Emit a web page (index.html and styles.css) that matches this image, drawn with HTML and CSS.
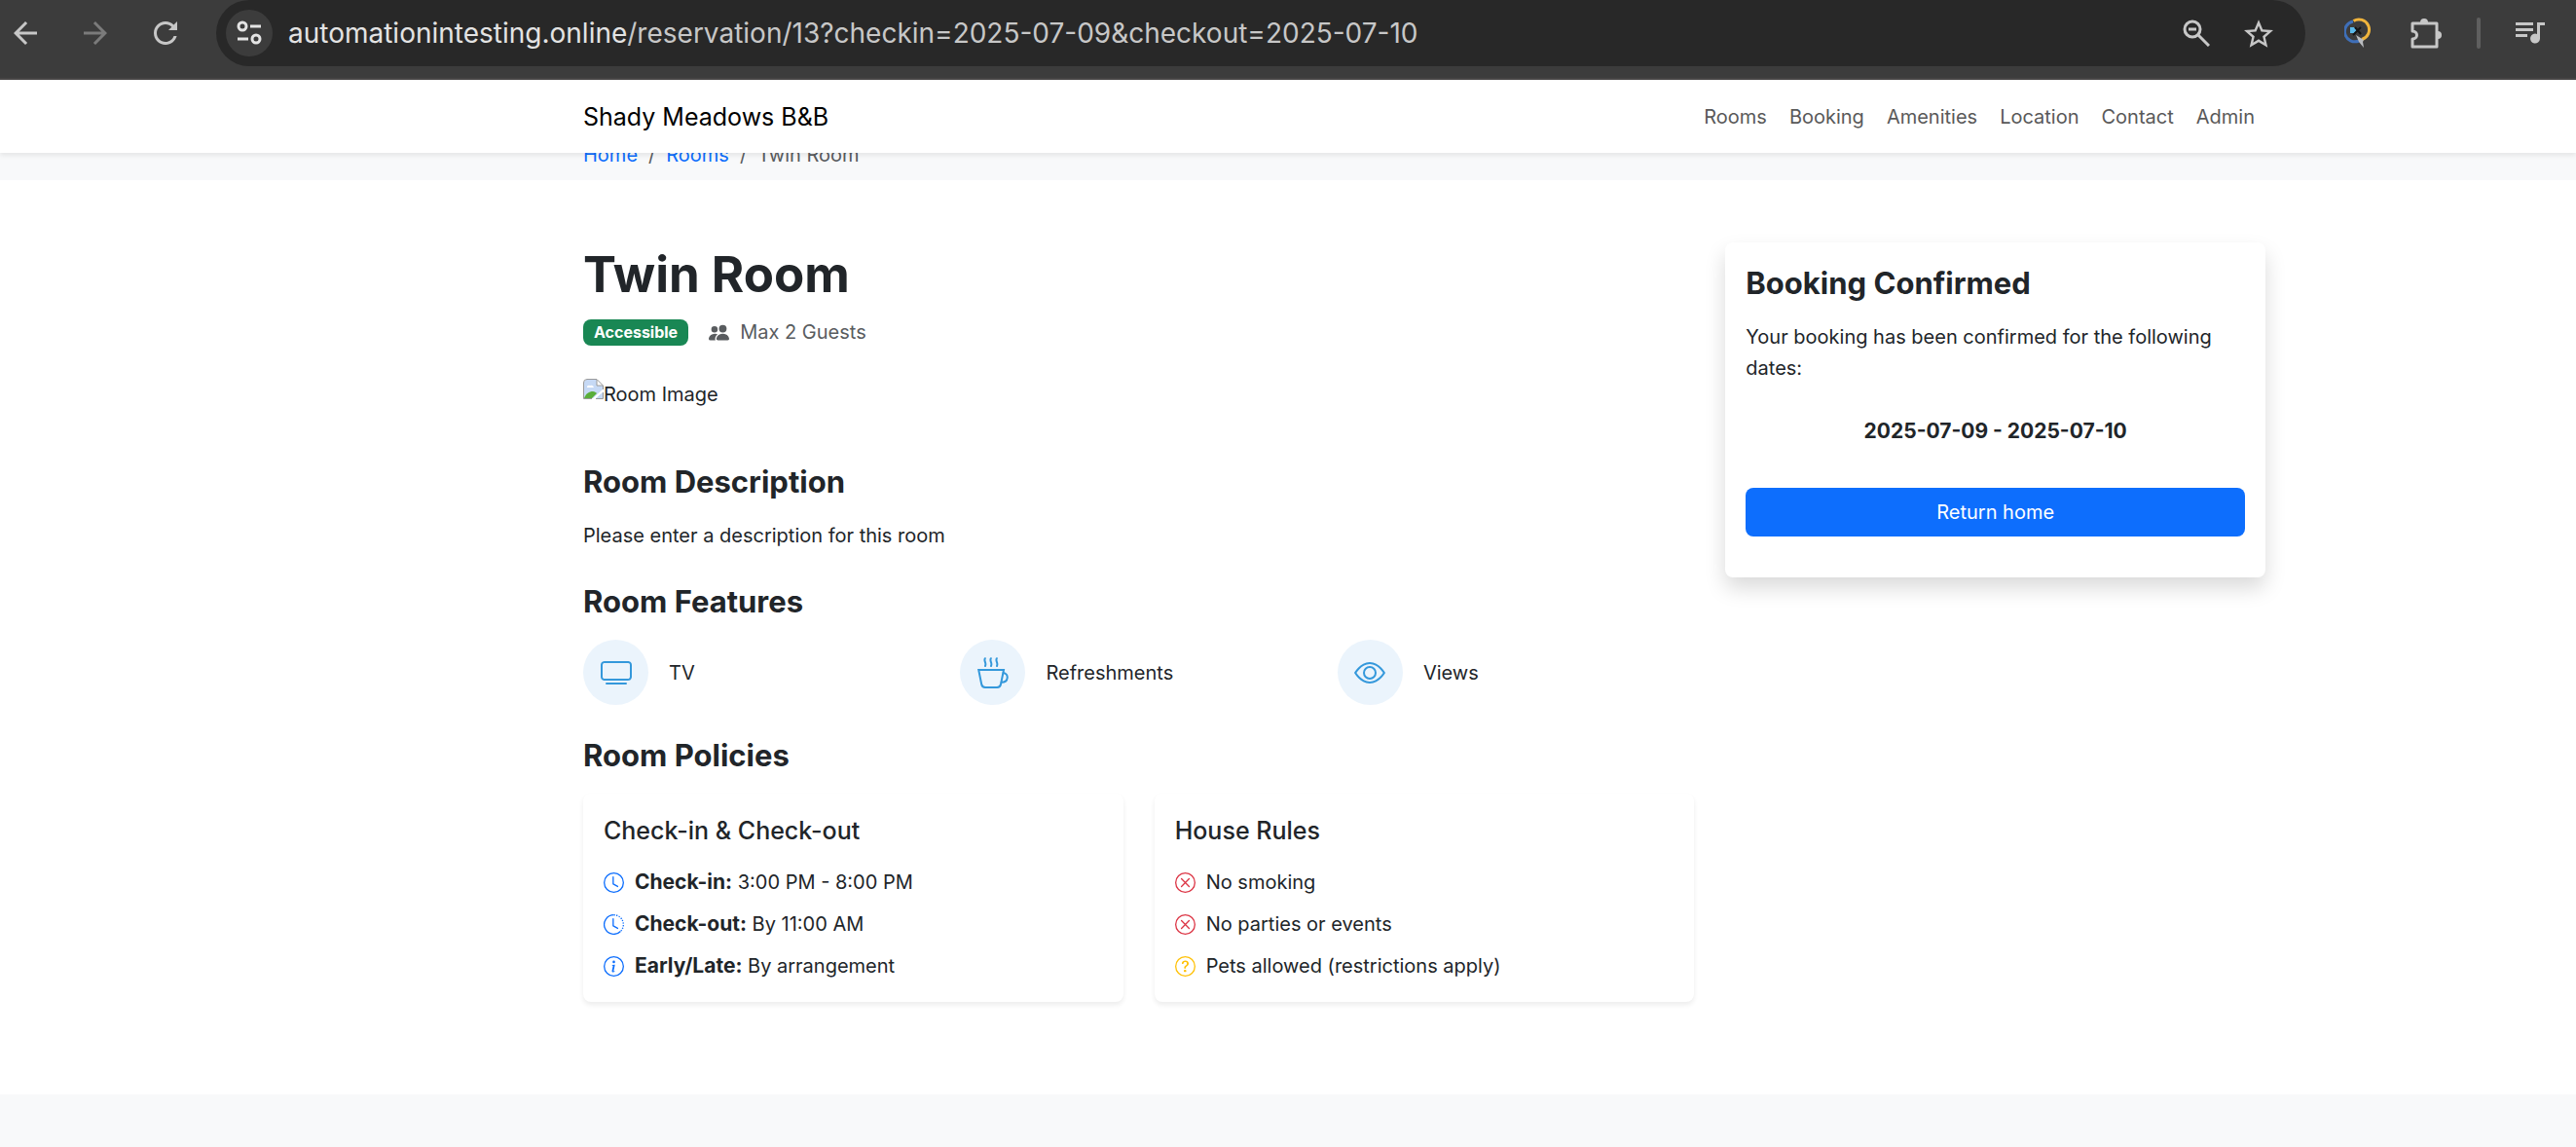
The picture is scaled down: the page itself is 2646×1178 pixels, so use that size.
FILE: index.html
```html
<!DOCTYPE html>
<html lang="en">
<head>
<meta charset="utf-8">
<title>Twin Room - Shady Meadows B&amp;B</title>
<link rel="stylesheet" href="styles.css">
</head>
<body>
<div class="toolbar">
  <div class="toolbar-nav">
    <button class="tool" type="button" aria-label="Back"><svg viewBox="4 4 16 16" width="24" height="24"><path fill="currentColor" d="M20 11H7.83l5.59-5.59L12 4l-8 8 8 8 1.41-1.41L7.83 13H20v-2z"/></svg></button>
    <button class="tool tool-off" type="button" aria-label="Forward"><svg viewBox="4 4 16 16" width="24" height="24"><path fill="currentColor" d="M12 4l-1.41 1.41L16.17 11H4v2h12.17l-5.58 5.59L12 20l8-8z"/></svg></button>
    <button class="tool" type="button" aria-label="Reload"><svg viewBox="4 4 16 16" width="24" height="24"><path fill="currentColor" d="M17.65 6.35C16.2 4.9 14.21 4 12 4c-4.42 0-7.99 3.58-7.99 8s3.57 8 7.99 8c3.73 0 6.84-2.55 7.73-6h-2.08c-.82 2.33-3.04 4-5.65 4-3.31 0-6-2.69-6-6s2.69-6 6-6c1.66 0 3.14.69 4.22 1.78L14 10h6V4z"/></svg></button>
  </div>
  <div class="address">
    <button class="site-info" type="button" aria-label="Site information"><svg viewBox="0 0 26 26" width="26" height="26" fill="none" stroke="currentColor" stroke-width="3"><circle cx="6" cy="6" r="4"/><path d="M14 6h11M1 19h11"/><circle cx="20" cy="19" r="4"/></svg></button>
    <div class="url" role="textbox" aria-label="Address" tabindex="0"><span class="url-host">automationintesting.online</span>/reservation/13?checkin=2025-07-09&amp;checkout=2025-07-10</div>
    <button class="tool" type="button" aria-label="Zoom"><svg viewBox="0 0 28 28" width="28" height="28" fill="none" stroke="currentColor" stroke-width="3"><circle cx="10" cy="10" r="8"/><path d="M16 16l11 11M6 10h8"/></svg></button>
    <button class="tool" type="button" aria-label="Bookmark"><svg viewBox="2 2 20 19" width="30" height="29"><path fill="currentColor" d="M22 9.24l-7.19-.62L12 2 9.19 8.63 2 9.24l5.46 4.73L5.82 21 12 17.27 18.18 21l-1.63-7.03L22 9.24zM12 15.4l-3.76 2.27 1-4.28-3.32-2.88 4.38-.38L12 6.1l1.71 4.04 4.38.38-3.32 2.88 1 4.28L12 15.4z"/></svg></button>
  </div>
  <div class="toolbar-end">
    <button class="tool" type="button" aria-label="Inspector extension"><svg viewBox="0 0 32 32" width="32" height="32" fill="none"><path d="M9 4A10.500 10.500 0 1 0 15 24" stroke="#3f6fb8" stroke-width="3"/><path d="M9.500 3.500A10.500 10.500 0 1 1 18 22.500" stroke="#f0b43c" stroke-width="3"/><path fill="#5bb8e8" d="M6 10h4l3 3-3 3H6z"/><path d="M9 18l8-8M11 10l6 7" stroke="#151515" stroke-width="2"/><path fill="#b9bcc0" d="M12 18l8 5-1 2 1 6-5-6z"/></svg></button>
    <button class="tool" type="button" aria-label="Extensions"><svg viewBox="0 0 32 32" width="32" height="32" fill="none"><path d="M2 6h25v24H2v-8c6 0 6-8 0-8z" stroke="currentColor" stroke-width="3" stroke-linejoin="round"/><path fill="currentColor" d="M10 5a4 4 0 0 1 8 0zM28 14a4 4 0 0 1 0 8z"/></svg></button>
    <span class="divider"></span>
    <button class="tool" type="button" aria-label="Media"><svg viewBox="0 0 30 24" width="30" height="24" fill="currentColor"><path d="M0 1h18v3H0zM0 7h18v3H0zM0 13h12v3H0zM22 1h8v3h-5v14a5 5 0 1 1-3-5z"/></svg></button>
  </div>
</div>

<header class="navbar page-grid">
  <nav class="navbar-inner" aria-label="Main">
    <a class="brand" href="#">Shady Meadows B&amp;B</a>
    <ul class="nav-links">
      <li><a href="#">Rooms</a></li>
      <li><a href="#">Booking</a></li>
      <li><a href="#">Amenities</a></li>
      <li><a href="#">Location</a></li>
      <li><a href="#">Contact</a></li>
      <li><a href="#">Admin</a></li>
    </ul>
  </nav>
</header>

<div class="crumb-band page-grid">
  <ol class="crumbs">
    <li><a href="#">Home</a></li>
    <li><a href="#">Rooms</a></li>
    <li>Twin Room</li>
  </ol>
</div>

<main class="room page-grid">
  <div class="room-columns">
    <article class="details">
      <h1>Twin Room</h1>
      <div class="meta">
        <span class="badge">Accessible</span>
        <span class="guests"><svg viewBox="0 0 16 16" width="21" height="21" fill="currentColor"><path d="M7 14s-1 0-1-1 1-4 5-4 5 3 5 4-1 1-1 1zm4-6a3 3 0 1 0 0-6 3 3 0 0 0 0 6m-5.784 6A2.240 2.240 0 0 1 5 13c0-1.355.68-2.750 1.936-3.720A6.300 6.300 0 0 0 5 9c-4 0-5 3-5 4s1 1 1 1zM4.500 8a2.500 2.500 0 1 0 0-5 2.500 2.500 0 0 0 0 5"/></svg>Max 2 Guests</span>
      </div>
      <div class="room-image" role="img" aria-label="Room Image"><svg viewBox="0 0 21 21" width="21" height="21"><path fill="#c6d9f5" d="M3 1h11l6 6v13H1V3z"/><path fill="#fff" d="M4 9a2 2 0 0 1 3-2 3 3 0 0 1 4 2z"/><path fill="#5aae3a" d="M1 20c2-5 5-7 9-7 2 0 3 1 4 2l-5 5z"/><path fill="#fff" d="M14 1v6h6zM21 10v3L12 21H9z"/><path fill="none" stroke="#9a9a9a" d="M9 20.500H.5V4a3.500 3.500 0 0 1 3.500-3.500h10l6.500 6.500v4M14 1v6h6M20.500 14v6.500H13"/></svg><span>Room Image</span></div>

      <section class="description">
        <h2>Room Description</h2>
        <p>Please enter a description for this room</p>
      </section>

      <section class="block">
        <h2>Room Features</h2>
        <ul class="features">
          <li><span class="feature-icon"><svg viewBox="0 0 16 16" width="32" height="32" fill="currentColor"><path d="M2.500 13.500A.5.5 0 0 1 3 13h10a.5.5 0 0 1 0 1H3a.5.5 0 0 1-.5-.5M13.991 3l.024.001a1.500 1.500 0 0 1 .538.143.760.760 0 0 1 .302.254c.067.1.145.277.145.602v5.991l-.001.024a1.500 1.500 0 0 1-.143.538.760.760 0 0 1-.254.302c-.1.067-.277.145-.602.145H2.009l-.024-.001a1.500 1.500 0 0 1-.538-.143.760.760 0 0 1-.302-.254C1.078 10.502 1 10.325 1 10V4.009l.001-.024a1.500 1.500 0 0 1 .143-.538.760.760 0 0 1 .254-.302C1.498 3.078 1.675 3 2 3zM14 2H2C0 2 0 4 0 4v6c0 2 2 2 2 2h12c2 0 2-2 2-2V4c0-2-2-2-2-2"/></svg></span>TV</li>
          <li><span class="feature-icon"><svg viewBox="0 0 16 16" width="32" height="32" fill="none" stroke="currentColor" stroke-linecap="round"><path d="M.6 6.500h12.900l-1.500 7.400a2 2 0 0 1-2 1.600H4.100a2 2 0 0 1-2-1.600z"/><path d="M13.300 8c2.900.3 2.900 4.800-1 4.900M3.900.6c-.8 1.500.9 2.200.1 3.900M6.900.6c-.8 1.500.9 2.200.1 3.900M9.900.6c-.8 1.500.9 2.200.1 3.900"/></svg></span>Refreshments</li>
          <li><span class="feature-icon"><svg viewBox="0 0 16 16" width="32" height="32" fill="currentColor"><path d="M16 8s-3-5.500-8-5.500S0 8 0 8s3 5.500 8 5.500S16 8 16 8M1.173 8a13 13 0 0 1 1.660-2.043C4.120 4.668 5.880 3.500 8 3.500s3.879 1.168 5.168 2.457A13 13 0 0 1 14.828 8q-.086.130-.195.288c-.335.480-.830 1.120-1.465 1.755C11.879 11.332 10.119 12.500 8 12.500s-3.879-1.168-5.168-2.457A13 13 0 0 1 1.172 8z"/><path d="M8 5.500a2.500 2.500 0 1 0 0 5 2.500 2.500 0 0 0 0-5M4.500 8a3.500 3.500 0 1 1 7 0 3.500 3.500 0 0 1-7 0"/></svg></span>Views</li>
        </ul>
      </section>

      <section class="block">
        <h2>Room Policies</h2>
        <div class="policies">
          <div class="policy">
            <h3>Check-in &amp; Check-out</h3>
            <ul>
              <li><svg class="info" viewBox="0 0 16 16" width="21" height="21" fill="none" stroke="currentColor" stroke-linecap="round"><circle cx="8" cy="8" r="7.500"/><path d="M7.500 3.500V9l3.500 2"/></svg><span><strong>Check-in:</strong> 3:00 PM - 8:00 PM</span></li>
              <li><svg class="info" viewBox="0 0 16 16" width="21" height="21" fill="none" stroke="currentColor"><path d="M8 .5a7.500 7.500 0 1 0 5.300 12.800"/><path stroke-dasharray="1 1" d="M8 .5a7.500 7.500 0 0 1 5.300 12.800"/><path stroke-linecap="round" d="M7.500 3.500V9l3.500 2"/></svg><span><strong>Check-out:</strong> By 11:00 AM</span></li>
              <li><svg class="info" viewBox="0 0 16 16" width="21" height="21" fill="currentColor"><path d="M8 15A7 7 0 1 1 8 1a7 7 0 0 1 0 14m0 1A8 8 0 1 0 8 0a8 8 0 0 0 0 16"/><path d="m8.930 6.588-2.290.287-.082.380.450.083c.294.070.352.176.288.469l-.738 3.468c-.194.897.105 1.319.808 1.319.545 0 1.178-.252 1.465-.598l.088-.416c-.2.176-.492.246-.686.246-.275 0-.375-.193-.304-.533zM9 4.500a1 1 0 1 1-2 0 1 1 0 0 1 2 0"/></svg><span><strong>Early/Late:</strong> By arrangement</span></li>
            </ul>
          </div>
          <div class="policy">
            <h3>House Rules</h3>
            <ul>
              <li><svg class="no" viewBox="0 0 16 16" width="21" height="21" fill="none" stroke="currentColor" stroke-linecap="round"><circle cx="8" cy="8" r="7.500"/><path d="M5 5l6 6M11 5l-6 6"/></svg><span>No smoking</span></li>
              <li><svg class="no" viewBox="0 0 16 16" width="21" height="21" fill="none" stroke="currentColor" stroke-linecap="round"><circle cx="8" cy="8" r="7.500"/><path d="M5 5l6 6M11 5l-6 6"/></svg><span>No parties or events</span></li>
              <li><svg class="maybe" viewBox="0 0 16 16" width="21" height="21" fill="currentColor"><path d="M8 15A7 7 0 1 1 8 1a7 7 0 0 1 0 14m0 1A8 8 0 1 0 8 0a8 8 0 0 0 0 16"/><path d="M5.255 5.786a.237.237 0 0 0 .241.247h.825c.138 0 .248-.113.266-.250.090-.656.540-1.134 1.342-1.134.686 0 1.314.343 1.314 1.168 0 .635-.374.927-.965 1.371-.673.489-1.206 1.060-1.168 1.987l.003.217a.25.25 0 0 0 .25.246h.811a.25.25 0 0 0 .25-.25v-.105c0-.718.273-.927 1.010-1.486.609-.463 1.244-.977 1.244-2.056 0-1.511-1.276-2.241-2.673-2.241-1.267 0-2.655.590-2.750 2.286m1.557 5.763c0 .533.425.927 1.010.927.609 0 1.028-.394 1.028-.927 0-.552-.420-.940-1.029-.940-.584 0-1.009.388-1.009.940"/></svg><span>Pets allowed (restrictions apply)</span></li>
            </ul>
          </div>
        </div>
      </section>
    </article>

    <aside class="booking">
      <h2>Booking Confirmed</h2>
      <p>Your booking has been confirmed for the following dates:</p>
      <p class="dates"><strong>2025-07-09 - 2025-07-10</strong></p>
      <a class="return" href="#">Return home</a>
    </aside>
  </div>
</main>

<footer class="footer"></footer>
</body>
</html>
```

FILE: styles.css
```css
*, *::before, *::after { box-sizing: border-box; }

body {
  margin: 0;
  min-height: 100vh;
  display: flex;
  flex-direction: column;
  background: #fff;
  color: #212529;
  font-family: Inter, "Liberation Sans", sans-serif;
  font-size: 20px;
  line-height: 32px;
}

h1, h2, h3, p, ul, ol { margin: 0; padding: 0; }
ul, ol { list-style: none; }
a { color: #0d6efd; text-decoration: none; }
strong { font-size: 21px; font-weight: 700; }
svg { display: block; flex: none; }

/* Browser toolbar */
.toolbar {
  display: flex;
  align-items: flex-start;
  background: #3c3c3c;
  border-bottom: 2px solid #474545;
  height: 82px;
  color: #c7c7c7;
}
.toolbar-nav, .toolbar-end, .address { display: flex; align-items: center; height: 68px; }
.toolbar-nav { gap: 48px; padding: 0 40px 0 14px; }
.toolbar-end { gap: 36px; padding: 0 32px 0 40px; }
.tool {
  display: flex;
  padding: 0;
  border: 0;
  background: none;
  color: inherit;
}
.tool-off { color: #7b7b7b; }
.address {
  flex: 1;
  gap: 35px;
  padding: 0 33px 0 10px;
  border-radius: 34px;
  background: #282828;
}
.site-info {
  display: flex;
  align-items: center;
  justify-content: center;
  width: 48px;
  height: 48px;
  margin-right: -19px;
  padding: 0;
  border: 0;
  border-radius: 50%;
  background: #3c3c3c;
  color: #e3e3e3;
}
.url { flex: 1; font-size: 28px; white-space: nowrap; }
.url-host { color: #e3e3e3; }
.divider { width: 4px; height: 32px; border-radius: 2px; background: #5f5f5f; }

/* Shared page columns: left margin, content, right margin */
.page-grid { display: grid; grid-template-columns: 599fr 1728fr 319fr; }
.page-grid > * { grid-column: 2; }

.navbar {
  position: relative;
  z-index: 1;
  background: #fff;
  box-shadow: 0 3px 5px rgba(0, 0, 0, 0.075);
}
.navbar-inner {
  display: flex;
  align-items: center;
  justify-content: space-between;
  height: 75px;
}
.brand { color: #000; font-size: 25px; }
.nav-links { display: flex; gap: 23px; padding-right: 11px; }
.nav-links a { color: #595959; }

/* The breadcrumb row is partly scrolled under the navbar */
.crumb-band { margin-top: -25px; padding: 11px 0 10px; background: #f8f9fa; }
.crumbs { display: flex; color: #595c5f; }
.crumbs li + li::before { content: "/"; padding: 0 11px; }

.room { padding: 64px 0 95px; }
.room-columns {
  display: grid;
  grid-template-columns: repeat(12, 1fr);
  column-gap: 32px;
  align-items: start;
}
.details { grid-column: span 8; }
.booking { grid-column: span 4; }

h1 { font-size: 51px; line-height: 66px; font-weight: 700; margin-bottom: 10px; }
h2 { font-size: 31px; line-height: 40px; font-weight: 700; margin-bottom: 19px; }
h3 { font-size: 25px; line-height: 34px; font-weight: 500; margin-bottom: 20px; }

.meta { display: flex; align-items: center; gap: 21px; margin-bottom: 32px; }
.badge {
  padding: 0 11px;
  border-radius: 8px;
  background: #198754;
  color: #fff;
  font-size: 16px;
  line-height: 27px;
  font-weight: 700;
}
.guests { display: flex; align-items: center; gap: 11px; color: #595c5f; }
.room-image { display: flex; }
.description { margin-top: 54px; }
.block { margin-top: 32px; }

.features { display: grid; grid-template-columns: repeat(3, 1fr); gap: 21px; }
.features li { display: flex; align-items: center; gap: 21px; }
.feature-icon {
  display: flex;
  align-items: center;
  justify-content: center;
  width: 67px;
  height: 67px;
  border-radius: 50%;
  background: #ebf4fc;
  color: #3498db;
}

.policies { display: grid; grid-template-columns: 1fr 1fr; gap: 32px; }
.policy {
  padding: 21px;
  border-radius: 8px;
  background: #fff;
  box-shadow: 0 3px 5px rgba(0, 0, 0, 0.075);
}
.policy ul { display: grid; gap: 11px; }
.policy li { display: flex; align-items: center; gap: 11px; }
.info { color: #0d6efd; }
.no { color: #dc3545; }
.maybe { color: #ffc107; }

.booking {
  padding: 22px 21px 42px;
  border-radius: 8px;
  background: #fff;
  box-shadow: 0 11px 21px rgba(0, 0, 0, 0.15);
}
.dates { padding: 33px 0 42px; text-align: center; }
.return {
  display: block;
  padding: 9px;
  border-radius: 8px;
  background: #0d6efd;
  color: #fff;
  text-align: center;
}

.footer { flex: 1; min-height: 54px; background: #f8f9fa; }
```
